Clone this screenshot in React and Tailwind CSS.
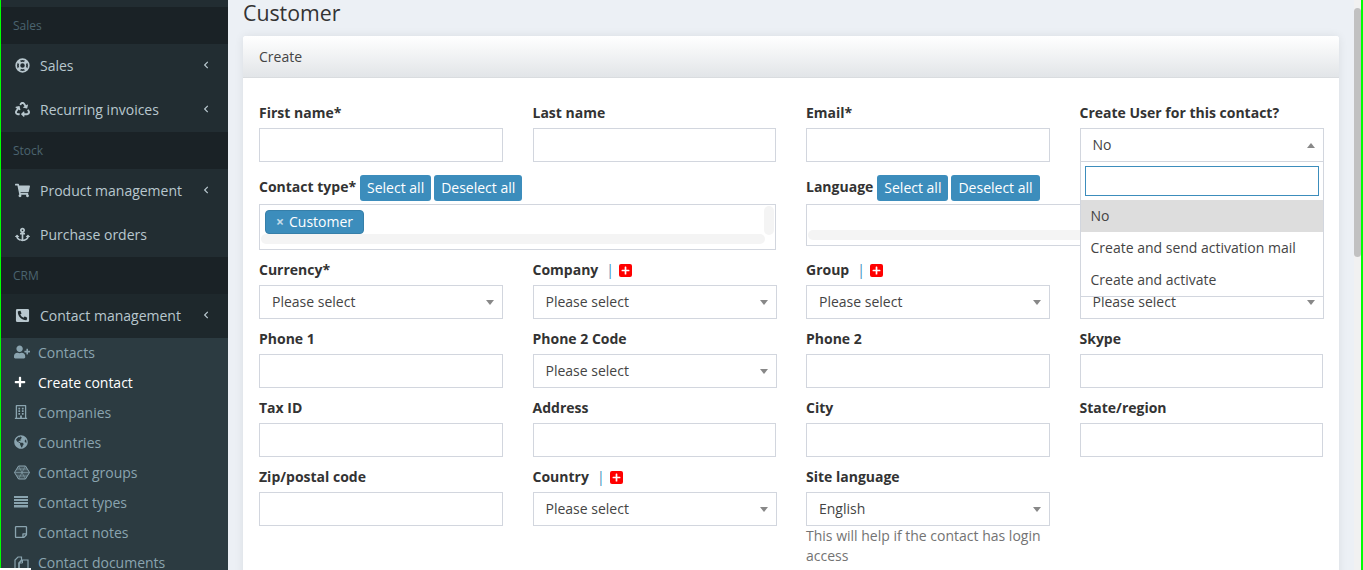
import React from "react";
import {
  FaRecycle, FaShoppingCart, FaAnchor, FaPhoneSquareAlt, FaUserPlus, FaPlus,
  FaRegBuilding, FaGlobeAmericas, FaRegStickyNote, FaChevronLeft,
} from "react-icons/fa";

function LifeRing() {
  return (
    <svg width="15" height="15" viewBox="0 0 15 15" fill="none" stroke="currentColor">
      <circle cx="7.5" cy="7.5" r="6.3" strokeWidth="1.7" />
      <circle cx="7.5" cy="7.5" r="3" strokeWidth="1.5" />
      <path d="M3 3l2.4 2.4M12 3 9.6 5.4M3 12l2.4-2.4M12 12 9.6 9.6" strokeWidth="3" />
    </svg>
  );
}

function Hex() {
  return (
    <svg width="16" height="15" viewBox="0 0 16 15" fill="currentColor" fillOpacity="0.25" stroke="currentColor" strokeWidth="1">
      <path d="M4.5 1h7L15.5 7.5 11.5 14h-7L.5 7.5z" />
      <path d="M4.5 1 8 7.5 4.5 14M11.5 1 8 7.5 11.5 14M.5 7.5h15M3 4h10M3 11h10" strokeWidth="0.6" fill="none" />
    </svg>
  );
}

function Bars() {
  return (
    <svg width="14" height="12" viewBox="0 0 14 12" fill="currentColor">
      <path d="M0 0h14v2H0zM0 3h14v2H0zM0 6h14v2H0zM0 9h14v2.500H0z" />
    </svg>
  );
}

function Files() {
  return (
    <svg width="15" height="15" viewBox="0 0 15 15" fill="none" stroke="currentColor" strokeWidth="1.2">
      <path d="M1 13.500V5l3-3h3.500v3L5 8v5.500z" />
      <path d="M5 13.500V8l3.500-3H14v8.500z" />
      <path d="M5 8h3.500V5" strokeWidth="1" />
    </svg>
  );
}

function Heading({ children }) {
  return <div className="h-[37px] bg-[#1a2226] pl-[12px] text-[12px] leading-[37px] text-[#4b646f]">{children}</div>;
}

function MenuItem({ icon: I, label, arrow, active }) {
  return (
    <div className={`flex h-[44px] items-center pb-[2px] text-[14px] text-[#b8c7ce] ${active ? "bg-[#1e282c]" : ""}`}>
      <span className="flex w-[39px] justify-center pl-[4px] text-[15px]"><I /></span>
      <span>{label}</span>
      {arrow && <FaChevronLeft className="ml-auto mr-[18px] text-[8px]" />}
    </div>
  );
}

function SubItem({ icon: I, label, active, size = "text-[14px]" }) {
  return (
    <div className={`flex h-[30px] items-center pb-[2px] text-[14px] ${active ? "text-white" : "text-[#8aa4af]"}`}>
      <span className={`flex w-[37px] justify-start pl-[13px] ${size}`}><I /></span>
      <span>{label}</span>
    </div>
  );
}

function Sidebar() {
  return (
    <aside className="h-[570px] w-[228px] shrink-0 overflow-hidden border-l-[1px] border-[#00ff00] bg-[#222d32]">
      <div className="h-[7px]" />
      <Heading>Sales</Heading>
      <MenuItem icon={LifeRing} label="Sales" arrow />
      <MenuItem icon={FaRecycle} label="Recurring invoices" arrow />
      <Heading>Stock</Heading>
      <MenuItem icon={FaShoppingCart} label="Product management" arrow />
      <MenuItem icon={FaAnchor} label="Purchase orders" />
      <Heading>CRM</Heading>
      <MenuItem icon={FaPhoneSquareAlt} label="Contact management" arrow active />
      <div className="bg-[#2c3b41]">
        <SubItem icon={FaUserPlus} label="Contacts" size="text-[16px]" />
        <SubItem icon={FaPlus} label="Create contact" size="text-[12px]" active />
        <SubItem icon={FaRegBuilding} label="Companies" />
        <SubItem icon={FaGlobeAmericas} label="Countries" />
        <SubItem icon={Hex} label="Contact groups" />
        <SubItem icon={Bars} label="Contact types" />
        <SubItem icon={FaRegStickyNote} label="Contact notes" />
        <SubItem icon={Files} label="Contact documents" />
      </div>
    </aside>
  );
}

function Label({ children }) {
  return <div className="mb-[5px] h-[20px] text-[14px] font-bold leading-[20px] text-[#333]">{children}</div>;
}

function AddLabel({ children }) {
  return (
    <div className="mb-[5px] flex h-[20px] items-center text-[14px] font-bold leading-[20px] text-[#333]">
      {children}
      <span className="ml-[8px] font-normal text-[#3c8dbc]">|</span>
      <span className="ml-[5px] flex h-[13px] w-[13px] items-center justify-center rounded-[2px] bg-[#f00] text-[9px] text-white"><FaPlus /></span>
    </div>
  );
}

function Input() {
  return <div className="h-[34px] border border-[#d2d6de] bg-white" />;
}

function Select({ text = "Please select", up }) {
  return (
    <div className="flex h-[34px] w-[244px] items-center justify-between border border-[#d2d6de] bg-white pb-[2px] pl-[12px] pr-[8px] text-[14px] text-[#444]">
      <span>{text}</span>
      {up ? (
        <span className="mt-[2px] h-0 w-0 border-x-[4px] border-b-[5px] border-x-transparent border-b-[#888]" />
      ) : (
        <span className="mt-[2px] h-0 w-0 border-x-[4px] border-t-[5px] border-x-transparent border-t-[#888]" />
      )}
    </div>
  );
}

function Col({ children, className = "" }) {
  return <div className={`px-[15px] ${className}`}>{children}</div>;
}

function Btn({ children }) {
  return <span className="flex h-[26px] items-center rounded-[3px] bg-[#3c8dbc] px-[7px] pb-[2px] text-[14px] font-normal text-white">{children}</span>;
}

function MultiLabel({ children }) {
  return (
    <div className="mb-[3px] mt-[3px] flex h-[26px] items-center gap-[3px] text-[14px] font-bold text-[#333]">
      <span className="mr-[1px] pb-[3px]">{children}</span>
      <Btn>Select all</Btn>
      <Btn>Deselect all</Btn>
    </div>
  );
}

function Row({ children }) {
  return <div className="mb-[10px] grid grid-cols-4">{children}</div>;
}

function Option({ children, active }) {
  return <div className={`flex h-[32px] items-center px-[10px] pb-[2px] ${active ? "bg-[#ddd]" : ""}`}>{children}</div>;
}

function Form() {
  return (
    <div className="px-[1px] pt-[25px]">
      <Row>
        <Col><Label>First name*</Label><Input /></Col>
        <Col><Label>Last name</Label><Input /></Col>
        <Col><Label>Email*</Label><Input /></Col>
        <Col>
          <Label>Create User for this contact?</Label>
          <div className="relative z-10">
            <Select text="No" up />
            <div className="absolute left-0 top-full w-[244px] border border-t-0 border-[#d2d6de] bg-white text-[14px] text-[#444]">
              <div className="p-[4px]">
                <div className="h-[30px] border border-[#3c8dbc] bg-white" />
              </div>
              <Option active>No</Option>
              <Option>Create and send activation mail</Option>
              <Option>Create and activate</Option>
            </div>
          </div>
        </Col>
      </Row>
      <div className="mb-[10px] grid grid-cols-2">
        <Col>
          <MultiLabel>Contact type*</MultiLabel>
          <div className="relative h-[46px] border border-[#d2d6de] bg-white">
            <span className="absolute left-[5px] top-[5px] flex h-[24px] items-center rounded-[4px] border border-[#367fa9] bg-[#3c8dbc] px-[10px] pb-[2px] text-[14px] text-white">
              <span className="mr-[5px] text-[14px] font-bold text-white/70">×</span>Customer
            </span>
            <div className="absolute bottom-[5px] left-[1px] right-[10px] h-[10px] rounded-[5px] bg-[#f4f4f4]" />
            <div className="absolute right-[1px] top-[1px] h-[29px] w-[10px] rounded-[5px] bg-[#f4f4f4]" />
          </div>
        </Col>
        <Col>
          <MultiLabel>Language</MultiLabel>
          <div className="relative h-[42px] border border-[#d2d6de] bg-white">
            <div className="absolute bottom-[5px] left-[1px] right-[1px] h-[10px] rounded-[5px] bg-[#f4f4f4]" />
          </div>
        </Col>
      </div>
      <Row>
        <Col><Label>Currency*</Label><Select /></Col>
        <Col><AddLabel>Company</AddLabel><Select /></Col>
        <Col><AddLabel>Group</AddLabel><Select /></Col>
        <Col><div className="mb-[5px] h-[20px]" /><Select /></Col>
      </Row>
      <Row>
        <Col><Label>Phone 1</Label><Input /></Col>
        <Col><Label>Phone 2 Code</Label><Select /></Col>
        <Col><Label>Phone 2</Label><Input /></Col>
        <Col><Label>Skype</Label><Input /></Col>
      </Row>
      <Row>
        <Col><Label>Tax ID</Label><Input /></Col>
        <Col><Label>Address</Label><Input /></Col>
        <Col><Label>City</Label><Input /></Col>
        <Col><Label>State/region</Label><Input /></Col>
      </Row>
      <Row>
        <Col><Label>Zip/postal code</Label><Input /></Col>
        <Col><AddLabel>Country</AddLabel><Select /></Col>
        <Col>
          <Label>Site language</Label>
          <Select text="English" />
          <div className="text-[14px] leading-[20px] text-[#737373]">This will help if the contact has login access</div>
        </Col>
        <Col />
      </Row>
    </div>
  );
}

export default function App() {
  return (
    <div className="relative flex h-[570px] w-[1363px] overflow-hidden bg-[#ecf0f5] font-['Open_Sans',sans-serif]">
      <Sidebar />
      <main className="min-w-0 flex-1 pl-[15px]">
        <h1 className="h-[36px] pt-[1px] text-[21.3px] leading-[24px] text-[#333]">Customer</h1>
        <div className="h-[600px] w-[1096px] rounded-[3px] bg-white shadow-[0_0_10px_rgba(0,0,0,0.08)]">
          <div className="h-[42px] rounded-t-[3px] border-b border-[#d9dcdf] bg-gradient-to-b from-white to-[#e2e5e8] pl-[16px] text-[14px] leading-[41px] text-[#444]">Create</div>
          <Form />
        </div>
      </main>
      <div className="h-full w-[7px] shrink-0 bg-[#f1f1f1]">
        <div className="mt-[8px] h-[249px] rounded-[4px] bg-[#c1c1c1]" />
      </div>
      <div className="h-full w-[2px] shrink-0 bg-[#00ff00]" />
      <div className="absolute bottom-0 left-0 h-[2px] w-[31px] bg-white" />
    </div>
  );
}
